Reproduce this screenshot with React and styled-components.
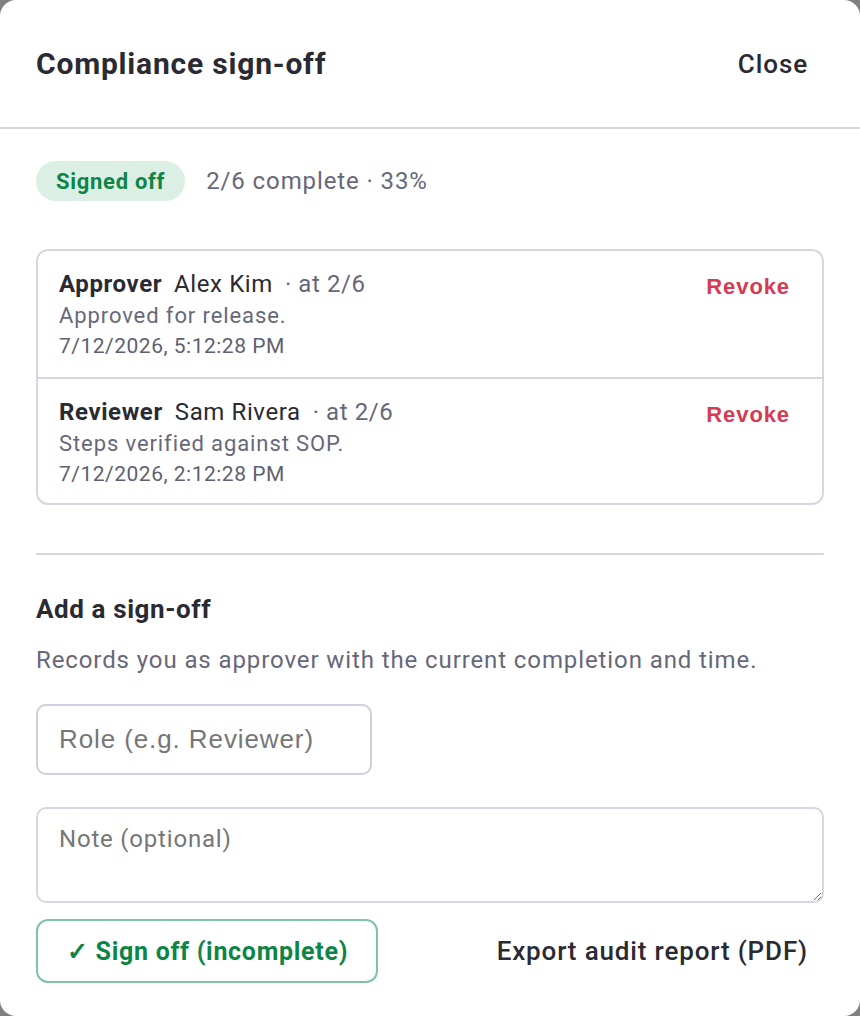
import React from "react";
import styled, { createGlobalStyle } from "styled-components";

const Global = createGlobalStyle`
  html, body {
    margin: 0;
    padding: 0;
    background: #808080;
  }
  * { box-sizing: border-box; }
`;

const Dialog = styled.div`
  width: 860px;
  height: 1016px;
  background: #fff;
  border-radius: 16px;
  font-family: Roboto, "Noto Sans", sans-serif;
  color: #2a2a33;
  display: flex;
  flex-direction: column;
  overflow: hidden;
`;

const Header = styled.div`
  height: 130px;
  padding: 0 52px 0 36px;
  display: flex;
  align-items: center;
  justify-content: space-between;
  border-bottom: 2px solid #d6d6e3;
`;

const Title = styled.h2`
  margin: 0;
  font-size: 30px;
  letter-spacing: 0.8px;
  font-weight: 700;
`;

const TextButton = styled.button`
  border: none;
  background: none;
  padding: 0;
  cursor: pointer;
  font-family: Roboto, sans-serif;
  font-size: 26px;
  letter-spacing: 0.9px;
  font-weight: 500;
  color: #2a2a33;
`;

const Body = styled.div`
  padding: 32px 36px 33px;
  display: flex;
  flex-direction: column;
`;

const StatusRow = styled.div`
  display: flex;
  align-items: center;
  gap: 21px;
`;

const Badge = styled.span`
  height: 40px;
  padding: 0 20px;
  border-radius: 20px;
  background: #dcefe4;
  color: #0c8546;
  font-size: 22px;
  letter-spacing: 0.7px;
  font-weight: 700;
  display: inline-flex;
  align-items: center;
`;

const Progress = styled.span`
  font-size: 24px;
  letter-spacing: 0.9px;
  color: #67677a;
`;

const List = styled.div`
  margin-top: 48px;
  border: 2px solid #d6d6e3;
  border-radius: 12px;
`;

const Entry = styled.div`
  height: 126px;
  padding: 17px 32px 0 21px;
  display: flex;
  justify-content: space-between;
  align-items: flex-start;
  & + & {
    border-top: 2px solid #d6d6e3;
  }
`;

const EntryText = styled.div`
  display: flex;
  flex-direction: column;
`;

const EntryHead = styled.div`
  font-size: 24px;
  letter-spacing: 0.6px;
  line-height: 32px;
  display: flex;
  gap: 12px;
`;

const Role = styled.span`
  font-weight: 700;
`;

const Meta = styled.span`
  color: #67677a;
`;

const Note = styled.div`
  font-size: 22px;
  letter-spacing: 0.9px;
  line-height: 31px;
  color: #67677a;
`;

const Stamp = styled.div`
  font-size: 21px;
  letter-spacing: 0.5px;
  line-height: 31px;
  color: #5f5f72;
`;

const Revoke = styled.button`
  border: none;
  background: none;
  padding: 0;
  margin-top: 6px;
  cursor: pointer;
  font-family: "Liberation Sans", Arial, sans-serif;
  font-size: 22px;
  letter-spacing: 0.9px;
  font-weight: 700;
  color: #d63a54;
`;

const Rule = styled.hr`
  margin: 48px 0 0;
  border: none;
  border-top: 2px solid #d6d6e3;
`;

const SectionTitle = styled.h3`
  margin: 38px 0 0;
  font-size: 26px;
  letter-spacing: 0.6px;
  line-height: 32px;
  font-weight: 700;
`;

const Hint = styled.p`
  margin: 20px 0 0;
  font-size: 24px;
  letter-spacing: 0.9px;
  line-height: 30px;
  color: #67677a;
`;

const RoleInput = styled.input`
  margin-top: 29px;
  width: 336px;
  height: 71px;
  padding: 0 21px;
  border: 2px solid #cfcfdd;
  border-radius: 10px;
  font-family: "Liberation Sans", Arial, sans-serif;
  font-size: 26px;
  letter-spacing: 0.9px;
  color: #2a2a33;
  outline: none;
  &::placeholder {
    color: #767676;
  }
`;

const NoteInput = styled.textarea`
  margin-top: 32px;
  width: 100%;
  height: 96px;
  padding: 16px 21px;
  border: 2px solid #d6d6e6;
  border-radius: 10px;
  font-family: Roboto, sans-serif;
  font-size: 24px;
  letter-spacing: 0.8px;
  color: #2a2a33;
  outline: none;
  resize: vertical;
  &::placeholder {
    color: #767676;
  }
`;

const Actions = styled.div`
  margin-top: 16px;
  display: flex;
  align-items: center;
  justify-content: space-between;
  padding-right: 16px;
`;

const SignButton = styled.button`
  height: 64px;
  padding: 0 28px 0 29px;
  border: 2px solid #7ec4a2;
  border-radius: 12px;
  background: #fff;
  cursor: pointer;
  font-family: Roboto, sans-serif;
  font-size: 25px;
  letter-spacing: 0.7px;
  font-weight: 700;
  color: #0c8546;
`;

const ExportButton = styled(TextButton)`
  font-size: 26px;
  letter-spacing: 0.85px;
`;

const entries = [
  { role: "Approver", name: "Alex Kim", at: "2/6", note: "Approved for release.", time: "7/12/2026, 5:12:28 PM" },
  { role: "Reviewer", name: "Sam Rivera", at: "2/6", note: "Steps verified against SOP.", time: "7/12/2026, 2:12:28 PM" },
];

export default function App() {
  return (
    <>
      <Global />
      <Dialog>
        <Header>
          <Title>Compliance sign-off</Title>
          <TextButton>Close</TextButton>
        </Header>
        <Body>
          <StatusRow>
            <Badge>Signed off</Badge>
            <Progress>2/6 complete · 33%</Progress>
          </StatusRow>
          <List>
            {entries.map((e) => (
              <Entry key={e.role}>
                <EntryText>
                  <EntryHead>
                    <Role>{e.role}</Role>
                    <span>{e.name}</span>
                    <Meta>· at {e.at}</Meta>
                  </EntryHead>
                  <Note>{e.note}</Note>
                  <Stamp>{e.time}</Stamp>
                </EntryText>
                <Revoke>Revoke</Revoke>
              </Entry>
            ))}
          </List>
          <Rule />
          <SectionTitle>Add a sign-off</SectionTitle>
          <Hint>Records you as approver with the current completion and time.</Hint>
          <RoleInput placeholder="Role (e.g. Reviewer)" />
          <NoteInput placeholder="Note (optional)" />
          <Actions>
            <SignButton>✓ Sign off (incomplete)</SignButton>
            <ExportButton>Export audit report (PDF)</ExportButton>
          </Actions>
        </Body>
      </Dialog>
    </>
  );
}
